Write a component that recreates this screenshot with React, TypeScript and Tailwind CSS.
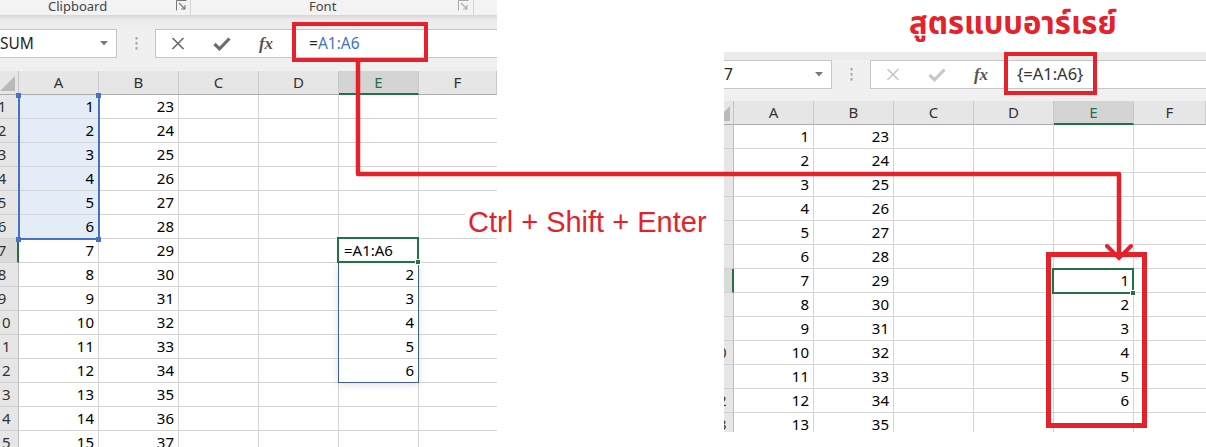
import React from "react";

const RED = "#e4222b";

function XIcon({ color }: { color: string }) {
  return (
    <svg width="14" height="13" viewBox="0 0 14 13">
      <path d="M1.5 1 L12.5 12 M12.5 1 L1.5 12" stroke={color} strokeWidth="1.7" fill="none" />
    </svg>
  );
}

function CheckIcon({ color }: { color: string }) {
  return (
    <svg width="18" height="14" viewBox="0 0 18 14">
      <path d="M1.5 7 L6.5 11.8 L16.5 1.5" stroke={color} strokeWidth="3.2" fill="none" />
    </svg>
  );
}

function Dots() {
  return (
    <svg width="3" height="13" viewBox="0 0 3 13">
      <rect x="0.5" y="0" width="2" height="2.6" fill="#a6a6a6" />
      <rect x="0.5" y="5" width="2" height="2.6" fill="#a6a6a6" />
      <rect x="0.5" y="10" width="2" height="2.6" fill="#a6a6a6" />
    </svg>
  );
}

function DropArrow() {
  return (
    <svg width="8" height="5" viewBox="0 0 8 5">
      <path d="M0 0 H8 L4 4.5 Z" fill="#7a7a7a" />
    </svg>
  );
}

function Launcher({ color }: { color: string }) {
  return (
    <svg width="11" height="11" viewBox="0 0 11 11">
      <path d="M0.5 0.5 H10.5 M0.5 0.5 V10.5" stroke={color} strokeWidth="1" fill="none" />
      <path d="M3 3 L9 9 M9 5 V9 H5" stroke={color} strokeWidth="1.1" fill="none" />
    </svg>
  );
}

function Corner({ w }: { w: string }) {
  return (
    <div className={`${w} h-[24px] shrink-0 bg-[#e6e6e6] border-r border-b border-r-[#c3c3c3] border-b-[#ababab] overflow-hidden relative`}>
      <svg className="absolute right-[3px] bottom-[3px]" width="15" height="15" viewBox="0 0 15 15">
        <path d="M15 0 V15 H0 Z" fill="#b9b9b9" />
      </svg>
    </div>
  );
}

const COLS = ["A", "B", "C", "D", "E", "F"];

function HeaderRow({ cornerW, lastW }: { cornerW: string; lastW: string }) {
  return (
    <div className="flex h-[24px] shrink-0">
      <Corner w={cornerW} />
      {COLS.map((c, i) => {
        const active = c === "E";
        const w = i === 5 ? lastW : "w-[80px]";
        return (
          <div
            key={c}
            className={`${w} shrink-0 h-[24px] flex items-center justify-center text-[15px] border-r border-r-[#c9c9c9] ${
              active
                ? "bg-[#d4d4d4] border-b-2 border-b-[#217346] text-[#217346]"
                : "bg-[#e6e6e6] border-b border-b-[#ababab] text-[#333]"
            }`}
          >
            {c}
          </div>
        );
      })}
    </div>
  );
}

function Rows({
  count,
  rhW,
  rhInner,
  lastW,
  side,
}: {
  count: number;
  rhW: string;
  rhInner: string;
  lastW: string;
  side: "left" | "right";
}) {
  return (
    <>
      {Array.from({ length: count }, (_, i) => {
        const r = i + 1;
        const active = r === 7;
        let eVal: React.ReactNode = "";
        let eLeft = false;
        if (side === "left") {
          if (r === 7) {
            eVal = "=A1:A6";
            eLeft = true;
          } else if (r >= 8 && r <= 12) eVal = String(r - 6);
        } else if (r >= 7 && r <= 12) eVal = String(r - 6);
        const aFill = side === "left" && r <= 6;
        return (
          <div key={r} className="flex h-[24px] shrink-0">
            <div
              className={`${rhW} shrink-0 h-[24px] overflow-hidden border-b border-b-[#d0d0d0] ${
                active
                  ? "bg-[#dadada] border-r-2 border-r-[#217346]"
                  : "bg-[#e6e6e6] border-r border-r-[#bcbcbc]"
              }`}
            >
              <div className={`${rhInner} h-[23px] flex items-center justify-center text-[15px] text-[#333]`}>{r}</div>
            </div>
            <div
              className={`w-[80px] shrink-0 h-[24px] border-b border-r border-[#d4d4d4] flex items-center justify-end pr-[4px] text-[15px] text-black ${
                aFill ? "bg-[#e4ecf7]" : ""
              }`}
            >
              {r}
            </div>
            <div className="w-[80px] shrink-0 h-[24px] border-b border-r border-[#d4d4d4] flex items-center justify-end pr-[4px] text-[15px] text-black">
              {r + 22}
            </div>
            <div className="w-[80px] shrink-0 h-[24px] border-b border-r border-[#d4d4d4]" />
            <div className="w-[80px] shrink-0 h-[24px] border-b border-r border-[#d4d4d4]" />
            <div
              className={`w-[80px] shrink-0 h-[24px] border-b border-r border-[#d4d4d4] flex items-center text-[15px] text-black ${
                eLeft ? "justify-start pl-[5px]" : "justify-end pr-[4px]"
              }`}
            >
              {eVal}
            </div>
            <div className={`${lastW} shrink-0 h-[24px] border-b border-[#d4d4d4]`} />
          </div>
        );
      })}
    </>
  );
}

function FormulaBar({
  nameW,
  nameText,
  active,
  textCls,
  children,
}: {
  nameW: string;
  nameText: string;
  active: boolean;
  textCls: string;
  children: React.ReactNode;
}) {
  const iconColor = active ? "#6b6b6b" : "#c8c8c8";
  return (
    <div className="flex h-[29px] shrink-0">
      <div className={`${nameW} shrink-0 h-[29px] bg-white border border-l-0 border-[#c6c6c6] flex items-center justify-between pr-[8px]`}>
        <span className="text-[15.5px] text-[#262626] leading-none">{nameText}</span>
        <DropArrow />
      </div>
      <div className="w-[38px] shrink-0 flex items-center justify-center">
        <Dots />
      </div>
      <div className="flex-1 h-[29px] bg-white border border-r-0 border-[#c6c6c6] flex items-center">
        <div className="w-[44px] shrink-0 flex justify-center">
          <XIcon color={iconColor} />
        </div>
        <div className="w-[44px] shrink-0 flex justify-center">
          <CheckIcon color={iconColor} />
        </div>
        <div className="w-[44px] shrink-0 flex justify-center">
          <span className="font-['Liberation_Serif',serif] italic font-bold text-[17px] text-[#555] leading-none">fx</span>
        </div>
        <div className={`${textCls} leading-none whitespace-nowrap`}>{children}</div>
      </div>
    </div>
  );
}

function LeftSheet() {
  return (
    <div className="w-[497px] h-[447px] shrink-0 flex flex-col overflow-hidden bg-[#f0f0f0]">
      {/* ribbon group labels */}
      <div className="h-[15px] shrink-0 bg-[#f3f3f3] flex text-[13px] leading-[15px] text-[#444]">
        <div className="w-[191px] shrink-0 flex items-start border-r border-[#d6d6d6] pl-[48px] pr-[3px]">
          <span className="-mt-[1px]">Clipboard</span>
          <div className="ml-auto">
            <Launcher color="#777" />
          </div>
        </div>
        <div className="w-[283px] shrink-0 flex items-start border-r border-[#d6d6d6] pl-[118px] pr-[4px]">
          <span className="-mt-[1px]">Font</span>
          <div className="ml-auto">
            <Launcher color="#aaa" />
          </div>
        </div>
      </div>
      <div className="h-[14px] shrink-0 bg-[linear-gradient(#d4d4d4,#e9e9e9_4px,#efefef)]" />
      <FormulaBar nameW="w-[117px]" nameText="SUM" active textCls="pl-[21px] text-[15.5px]">
        <span className="text-[#262626]">=</span>
        <span className="text-[#4472c4]">A1:A6</span>
      </FormulaBar>
      <div className="h-[13px] shrink-0" />
      <HeaderRow cornerW="w-[19px]" lastW="w-[78px]" />
      <div className="relative flex flex-col bg-white">
        <Rows count={15} rhW="w-[19px]" rhInner="w-[32px] -ml-[14px]" lastW="w-[78px]" side="left" />
        {/* A1:A6 reference highlight */}
        <div className="absolute left-[18px] top-0 w-[82px] h-[145px] border-2 border-t-0 border-[#4472c4]" />
        <div className="absolute left-[16px] -top-[2px] w-[5px] h-[5px] bg-[#4472c4]" />
        <div className="absolute left-[96px] -top-[2px] w-[5px] h-[5px] bg-[#4472c4]" />
        <div className="absolute left-[16px] top-[142px] w-[5px] h-[5px] bg-[#4472c4]" />
        <div className="absolute left-[96px] top-[142px] w-[5px] h-[5px] bg-[#4472c4]" />
        {/* E8:E12 range */}
        <div className="absolute left-[338px] top-[167px] w-[81px] h-[121px] border border-[#3f5d9c] shadow-[0_2px_8px_rgba(0,0,0,0.12)]" />
        {/* E7 active */}
        <div className="absolute left-[337px] top-[142px] w-[82px] h-[26px] border-2 border-[#217346]" />
        <div className="absolute left-[415px] top-[164px] w-[6px] h-[6px] bg-[#217346] border border-white" />
      </div>
    </div>
  );
}

function RightSheet() {
  return (
    <div className="w-[482px] h-[380px] shrink-0 flex flex-col overflow-hidden bg-[#f0f0f0]">
      <div className="h-[8px] shrink-0 bg-[#ebebeb]" />
      <FormulaBar nameW="w-[108px]" nameText="7" active={false} textCls="pl-[14px] text-[16.5px]">
        <span className="text-[#333]">{"{=A1:A6}"}</span>
      </FormulaBar>
      <div className="h-[12px] shrink-0" />
      <HeaderRow cornerW="w-[10px]" lastW="w-[72px]" />
      <div className="relative flex flex-col bg-white">
        <Rows count={13} rhW="w-[10px]" rhInner="w-[30px] -ml-[21px]" lastW="w-[72px]" side="right" />
        <div className="absolute left-[328px] top-[143px] w-[82px] h-[26px] border-2 border-[#217346]" />
        <div className="absolute left-[406px] top-[165px] w-[6px] h-[6px] bg-[#217346] border border-white" />
      </div>
    </div>
  );
}

export default function App() {
  return (
    <div className="relative w-[1206px] h-[447px] overflow-hidden bg-white flex font-['Noto_Sans','Open_Sans',sans-serif]">
      <LeftSheet />
      <div className="w-[227px] shrink-0" />
      <div className="w-[482px] shrink-0 flex flex-col">
        <div className="h-[52px] shrink-0 pl-[185px] pt-[4px]">
          <span className="font-['Noto_Sans_Thai','Noto_Sans','Tahoma',sans-serif] font-bold text-[31px] leading-[42px] text-[#e4222b] whitespace-nowrap">
            สูตรแบบอาร์เรย์
          </span>
        </div>
        <RightSheet />
      </div>

      <div className="absolute left-[465px] top-[207px] bg-white px-[3px] py-[1px] text-[29px] leading-[29px] text-[#e4222b] font-['Liberation_Sans',Arial,sans-serif] whitespace-nowrap">
        Ctrl + Shift + Enter
      </div>

      <svg className="absolute inset-0 pointer-events-none" width="1206" height="447" viewBox="0 0 1206 447">
        <rect x="294" y="24" width="132" height="36" stroke={RED} strokeWidth="4" fill="none" />
        <path d="M358 62 V174 H1119 V258" stroke={RED} strokeWidth="4.5" fill="none" strokeLinejoin="round" />
        <path d="M1107 246 L1119 258 L1131 246" stroke={RED} strokeWidth="4" fill="none" strokeLinecap="round" />
        <rect x="1006" y="54" width="89" height="39" stroke={RED} strokeWidth="4" fill="none" />
        <rect x="1048.5" y="254.5" width="96" height="171" stroke={RED} strokeWidth="5" fill="none" />
      </svg>
    </div>
  );
}
